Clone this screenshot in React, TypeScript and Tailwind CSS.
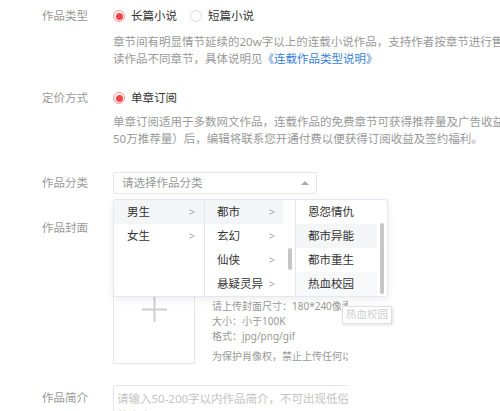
import React from "react";

const Radio = ({ checked }: { checked: boolean }) =>
  checked ? (
    <span className="flex h-[12px] w-[12px] shrink-0 items-center justify-center rounded-full border border-[#f59a9a] bg-[#fff0f0]">
      <span className="block h-[7px] w-[7px] rounded-full bg-[#f0464b]" />
    </span>
  ) : (
    <span className="block h-[12px] w-[12px] shrink-0 rounded-full border border-[#dcdcdc] bg-white" />
  );

const Label = ({ children }: { children: React.ReactNode }) => (
  <div className="w-[88px] shrink-0 text-right text-[11.5px] leading-[18px] text-[#999]">{children}</div>
);

const Chevron = () => <span className="text-[11px] text-[#aaa]">&gt;</span>;

export default function App() {
  return (
    <div
      className="relative h-[411px] w-[500px] overflow-hidden bg-white"
      style={{ fontFamily: '"Noto Sans", "Noto Sans CJK SC", sans-serif' }}
    >
      <div className="w-[700px]">
        {/* Row 1 */}
        <div className="mt-[7px] flex items-center">
          <Label>作品类型</Label>
          <div className="ml-[25px] flex items-center text-[11.5px] leading-[18px] text-[#333]">
            <Radio checked />
            <span className="ml-[6px]">长篇小说</span>
            <span className="ml-[13px] block">
              <Radio checked={false} />
            </span>
            <span className="ml-[6px]">短篇小说</span>
          </div>
        </div>
        <div className="ml-[113px] mt-[8px] whitespace-nowrap text-[11.5px] leading-[17px] text-[#999]">
          <div>章节间有明显情节延续的20w字以上的连载小说作品，支持作者按章节进行售卖，读者可以按章节购买阅</div>
          <div>
            读作品不同章节，具体说明见<span className="text-[#3a7fd5]">《连载作品类型说明》</span>
          </div>
        </div>

        {/* Row 2 */}
        <div className="mt-[22px] flex items-center">
          <Label>定价方式</Label>
          <div className="ml-[25px] flex items-center text-[11.5px] leading-[18px] text-[#333]">
            <Radio checked />
            <span className="ml-[6px]">单章订阅</span>
          </div>
        </div>
        <div className="ml-[113px] mt-[6px] whitespace-nowrap text-[11.5px] leading-[17px] text-[#999]">
          <div>单章订阅适用于多数网文作品，连载作品的免费章节可获得推荐量及广告收益（达到签约标准，如获得</div>
          <div>50万推荐量）后，编辑将联系您开通付费以便获得订阅收益及签约福利。</div>
        </div>

        {/* Row 3 */}
        <div className="mt-[25px] flex items-center">
          <Label>作品分类</Label>
          <div className="ml-[25px] flex h-[22px] w-[204px] items-center justify-between rounded-[2px] border border-[#e6e6e6] pl-[8px] pr-[7px]">
            <span className="text-[11.5px] text-[#999]">请选择作品分类</span>
            <span className="block h-0 w-0 border-x-[4px] border-b-[4px] border-x-transparent border-b-[#aaa]" />
          </div>
        </div>

        {/* Row 4 */}
        <div className="mt-[25px] flex items-start">
          <Label>作品封面</Label>
          <div className="ml-[25px] flex items-end pt-[35px]">
            <div className="flex h-[110px] w-[82px] items-center justify-center border border-[#e6e6e6]">
              <svg width="25" height="25" viewBox="0 0 25 25">
                <path d="M12.5 0V25M0 12.5H25" stroke="#cfcfcf" strokeWidth="2" />
              </svg>
            </div>
            <div className="ml-[17px] w-[136px] overflow-hidden whitespace-nowrap text-[10px] leading-[15px] text-[#999]">
              <div>请上传封面尺寸：180*240像素</div>
              <div>大小：小于100K</div>
              <div>格式：jpg/png/gif</div>
              <div className="mt-[5px]">为保护肖像权，禁止上传任何以真人为主体的图片</div>
            </div>
          </div>
        </div>

        {/* Row 5 */}
        <div className="mt-[21px] flex items-start">
          <div className="pt-[4px]">
            <Label>作品简介</Label>
          </div>
          <div className="ml-[25px] w-[235px] overflow-hidden">
            <div className="h-[80px] w-[244px] rounded-[2px] border border-[#e6e6e6] pl-[3px] pt-[4px] text-[11.5px] leading-[17px] text-[#c4c4c4]">
              请输入50-200字以内作品简介，不可出现低俗的内容
            </div>
          </div>
        </div>
      </div>

      {/* Cascader dropdown */}
      <div className="absolute left-[113px] top-[199px] flex h-[98px] rounded-[3px] border border-[#e4e7ed] bg-white text-[11.5px] text-[#333] shadow-[0_2px_8px_rgba(0,0,0,0.08)]">
        <div className="w-[91px] border-r border-[#e4e7ed]">
          <div className="flex h-[24px] items-center justify-between bg-[#f4f5f7] pl-[13px] pr-[9px]">
            <span>男生</span>
            <Chevron />
          </div>
          <div className="flex h-[24px] items-center justify-between pl-[13px] pr-[9px]">
            <span>女生</span>
            <Chevron />
          </div>
        </div>
        <div className="relative w-[91px] border-r border-[#e4e7ed]">
          <div className="w-[78px]">
            <div className="flex h-[24px] items-center justify-between bg-[#f4f5f7] pl-[12px] pr-[8px]">
              <span>都市</span>
              <Chevron />
            </div>
            <div className="flex h-[24px] items-center justify-between pl-[12px] pr-[8px]">
              <span>玄幻</span>
              <Chevron />
            </div>
            <div className="flex h-[24px] items-center justify-between pl-[12px] pr-[8px]">
              <span>仙侠</span>
              <Chevron />
            </div>
            <div className="flex h-[24px] items-center justify-between pl-[12px] pr-[8px]">
              <span>悬疑灵异</span>
              <Chevron />
            </div>
          </div>
          <div className="absolute left-[83px] top-[48px] h-[22px] w-[4px] rounded-full bg-[#c6c6c6]" />
        </div>
        <div className="relative w-[91px]">
          <div className="w-[81px]">
            <div className="flex h-[24px] items-center pl-[12px]">恩怨情仇</div>
            <div className="flex h-[24px] items-center bg-[#f4f5f7] pl-[12px]">都市异能</div>
            <div className="flex h-[24px] items-center pl-[12px]">都市重生</div>
            <div className="flex h-[24px] items-center bg-[#f7f8fa] pl-[12px]">热血校园</div>
          </div>
          <div className="absolute left-[84px] top-[23px] h-[71px] w-[4px] rounded-full bg-[#c6c6c6]" />
        </div>
      </div>

      {/* Tooltip */}
      <div className="absolute left-[342px] top-[306px] flex h-[18px] items-center border border-[#e0e0e0] bg-white px-[3px] text-[10.5px] text-[#cfcfcf] shadow-[1px_1px_3px_rgba(0,0,0,0.12)]">
        热血校园
      </div>
    </div>
  );
}
